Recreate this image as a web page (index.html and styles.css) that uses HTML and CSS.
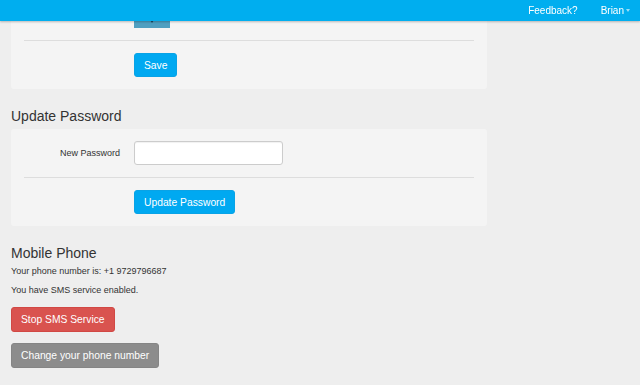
FILE: index.html
```html
<!DOCTYPE html>
<html lang="en">
<head>
  <meta charset="UTF-8">
  <meta name="viewport" content="width=device-width, initial-scale=1.0">
  <title>Account Settings</title>
  <link rel="stylesheet" href="styles.css">
</head>
<body>
  <div class="navbar">
    <a href="#" class="nav-link">Feedback?</a>
    <a href="#" class="nav-link">Brian <span class="caret"></span></a>
  </div>

  <div class="page">
    <!-- Profile settings (scrolled up) -->
    <div class="card card-first">
      <div class="row">
        <div class="label"></div>
        <div class="dropdown-toggle"><span class="caret dark"></span></div>
      </div>
      <div class="row">
        <div class="label"></div>
        <button class="btn btn-primary">Save</button>
      </div>
    </div>

    <h2>Update Password</h2>
    <div class="card">
      <div class="row">
        <label class="label" for="new-password">New Password</label>
        <input type="password" id="new-password" class="input">
      </div>
      <div class="row">
        <div class="label"></div>
        <button class="btn btn-primary">Update Password</button>
      </div>
    </div>

    <h2 class="mobile-title">Mobile Phone</h2>
    <p>Your phone number is: +1 9729796687</p>
    <p>You have SMS service enabled.</p>
    <div class="phone-actions">
      <button class="btn btn-danger">Stop SMS Service</button>
      <button class="btn btn-default">Change your phone number</button>
    </div>
  </div>
</body>
</html>
```

FILE: styles.css
```css
/* Global */
body {
  margin: 0;
  background: #eeeeee;
  color: #333;
  font-family: "Liberation Sans", Arial, sans-serif;
  font-size: 9px;
}

/* Top bar */
.navbar {
  position: fixed;
  top: 0;
  left: 0;
  right: 0;
  height: 21px;
  background: #00aeef;
  box-shadow: 0 1px 2px rgba(0, 0, 0, 0.25);
  display: flex;
  justify-content: flex-end;
  align-items: center;
  gap: 23px;
  padding-right: 10px;
  z-index: 10;
}
.nav-link {
  color: #fff;
  font-size: 10px;
  text-decoration: none;
  display: flex;
  align-items: center;
  gap: 2px;
}
.caret {
  display: inline-block;
  width: 0;
  height: 0;
  border-left: 2.5px solid transparent;
  border-right: 2.5px solid transparent;
  border-top: 3px solid rgba(255, 255, 255, 0.6);
}
.caret.dark {
  border-top-color: #1d4a60;
}

/* Page */
.page {
  width: 476px;
  margin-left: 11px;
}
.card {
  background: #f4f4f4;
  border-radius: 3px;
  padding: 0 13px;
}
.card-first {
  margin-top: -8px;
}
.row {
  display: flex;
  align-items: center;
  padding: 12px 0;
}
.row + .row {
  border-top: 1px solid #dddddd;
}
.label {
  width: 96px;
  margin-right: 14px;
  text-align: right;
  font-size: 9px;
  color: #333;
}

.dropdown-toggle {
  width: 36px;
  height: 24px;
  background: #4f9fc0;
  display: flex;
  justify-content: center;
  align-items: flex-end;
  padding-bottom: 5px;
  box-sizing: border-box;
}

.input {
  width: 149px;
  height: 24px;
  box-sizing: border-box;
  border: 1px solid #cccccc;
  border-radius: 3px;
  background: #fff;
  box-shadow: inset 0 1px 1px rgba(0, 0, 0, 0.06);
  outline: none;
}

/* Headings */
h2 {
  font-size: 14px;
  font-weight: normal;
  line-height: 16px;
  margin: 19px 0 5px;
  color: #333;
}
.mobile-title {
  margin-top: 19px;
  margin-bottom: 4px;
}
p {
  margin: 0 0 6px;
  line-height: 13px;
}

/* Buttons */
.btn {
  height: 24px;
  padding: 0 9px;
  font-family: inherit;
  font-size: 10.3px;
  color: #fff;
  border: 1px solid transparent;
  border-radius: 3px;
  cursor: pointer;
}
.btn-primary {
  background: #00a9f1;
  border-color: #09a3e6;
}
.btn-danger {
  background: #d9534f;
  border-color: #d14844;
}
.btn-default {
  background: #8c8c8c;
  border-color: #858585;
}
.phone-actions {
  display: flex;
  flex-direction: column;
  align-items: flex-start;
  gap: 11px;
  margin-top: 10px;
}
.phone-actions .btn {
  height: 25px;
}
```
